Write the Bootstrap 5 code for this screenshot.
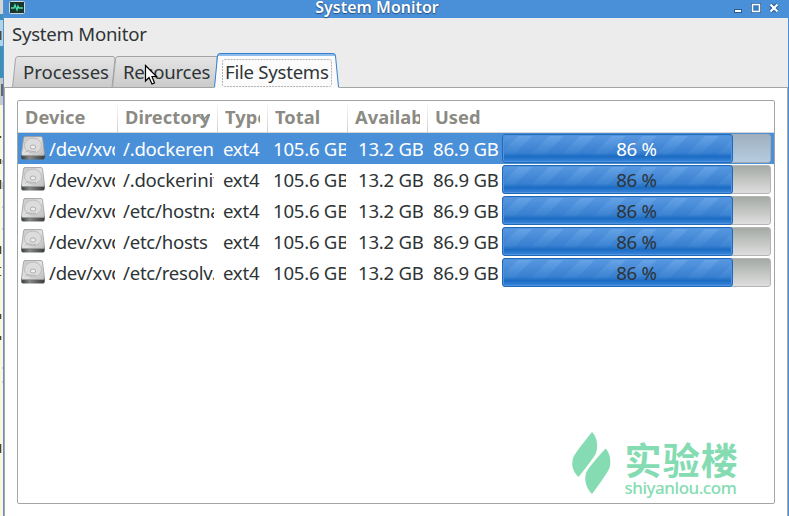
<!DOCTYPE html>
<html lang="en">
<head>
<meta charset="utf-8">
<title>System Monitor</title>
<link rel="stylesheet" href="https://cdn.jsdelivr.net/npm/bootstrap@5.3.0/dist/css/bootstrap.min.css">
<style>
html,body{height:100%}
body{margin:0;overflow:hidden;background:#fff5dc;color:#2e3436;font:18.6px/30px "Noto Sans",sans-serif;letter-spacing:-.25px}
.screen{width:789px;height:516px}
.desk{width:3px;flex:none}
.desk svg{display:block}
.win{width:786px;border-left:1px solid #5c92c8;border-right:1px solid #4a90d9;background:#ececec}
.titlebar{height:18px;background:#4a90d9;color:#fff}
.titlebar .cap{left:0;right:38px;top:-8px;text-align:center;font-size:16px;letter-spacing:0;font-weight:600;text-shadow:0 1px 1px #25507d,1px 0 1px #3a70ad}
.appicon{left:5px;top:1px}
.controls{left:730px;top:2px}
.menu{height:34px;padding:1px 0 0 8px}
.tabs{height:36px}
.tabs svg{left:0;top:0}
.tabs span{position:relative;white-space:nowrap;margin-top:5px;width:102px}
.tabs span:first-of-type{margin-left:19px;width:100px;letter-spacing:-.05px}
.page{height:428px;background:#fff;border:1px solid #a8aaa9;border-width:0 1px;padding:12px 12px 0}
.tree{width:758px;height:404px;border:1px solid #a3a5a5;border-radius:2px;background:#fff}
.line{display:grid;grid-template-columns:100px 100px 50px 80px 80px 346px}
.heads{height:32px;border-bottom:1px solid #d5d5d3;color:#8b8b84;font-weight:700;font-size:18.3px;letter-spacing:.05px}
.heads>div{padding:0 7px;border:0 solid transparent;border-image:linear-gradient(#fff,#ccc) 1;border-right-width:1px;line-height:32px}
.heads>div:last-child{border:0}
.sorter{left:79px;top:12px}
.clip{display:block;overflow:hidden;white-space:nowrap}
.item{height:31px;line-height:31px}
.item.sel{background:#4a90d9;color:#fff}
.item>div{overflow:hidden;white-space:nowrap}
.dev{padding-left:3px;margin-right:3px}
.dev svg{margin:3px 4px 0 0}
.dir{margin:0 4px 0 5px}
.kind{padding-left:5px}
.total{margin:0 2px 0 5px}
.avail{margin:0 5px 0 10px}
.usage{padding-left:5px}
.usage>span{width:69px}
.bar{width:269px;height:29px;margin-top:1px;border:1px solid #b4b6b4;border-radius:3px;background:linear-gradient(#a5aaa5,#dedede)}
.fill{height:29px;margin:-1px 0 0 -1px;border:1px solid #2069b8;border-radius:3px;box-shadow:inset 0 0 0 1px #4f94e0;background:linear-gradient(#3d85d600 0,#2471c7a0 65%,#1c6cc4 80%,#3b87dc 100%),repeating-linear-gradient(135deg,#5998e0 0 11px,#69a5e7 12px 21px,#5998e0 22px)}
.sel .bar{background:linear-gradient(#9fb1c0,#b5cbe0);border-color:#a4acb2}
.pct{inset:0;text-align:center;line-height:27px}
.logo{left:568px;top:428px}
.pointer{left:144px;top:64px}
</style>
<script src="https://cdn.jsdelivr.net/npm/bootstrap@5.3.0/dist/js/bootstrap.bundle.min.js"></script>
</head>
<body>
<svg width="0" height="0" class="position-absolute"><defs>
<linearGradient id="mt" x2="1" y2="1"><stop stop-color="#c4c4c4"/><stop offset=".5" stop-color="#e2e2e2"/><stop offset="1" stop-color="#bbb"/></linearGradient>
<linearGradient id="ft" x2="1"><stop stop-color="#3a3c3b"/><stop offset=".35" stop-color="#858786"/><stop offset="1" stop-color="#3a3c3b"/></linearGradient>
<symbol id="disk" viewBox="0 0 24 24"><path d="M.300 18V21.500Q.300 23.500 2 23.500H22Q23.700 23.500 23.700 21.500V18Z" fill="url(#ft)"/><path d="M4 .500H20Q21.300.500 21.500 2L23.500 18Q23.500 19.500 22 19.500H2Q.400 19.500.5 18L2.500 2Q2.700.500 4 .500Z" fill="url(#mt)" stroke="#9b9c9b" stroke-width=".8"/><ellipse cx="12" cy="9.500" rx="8.500" ry="7.500" fill="#dcdcdc" stroke="#b4b4b4" stroke-width=".8"/><ellipse cx="12" cy="11" rx="2.800" ry="2" fill="#eee" stroke="#a2a2a2" stroke-width=".8"/><path d="M4 16.500C7 12.500 10 17 15 15" fill="none" stroke="#b0b0b0"/></symbol>
<linearGradient id="tg" x2="0" y2="1"><stop stop-color="#e5e5e5"/><stop offset="1" stop-color="#cacaca"/></linearGradient>
</defs></svg>
<div class="screen d-flex position-relative">
  <div class="desk"><svg width="3" height="516"><path fill="#d2d4d5" d="M0 0h3v18H0z"/><path fill="#3c91bb" d="M0 14h3v64H0z"/><path fill="#b0d4e7" d="M0 20h3v26H0z"/><path fill="#c9c9c9" d="M0 78h3v27H0z"/><path stroke="#4b4640" stroke-width="1.500" d="M.7 31v9M2 84v12M.5 136v2M.5 159v5M.5 180v9M.5 246v8M.5 267v1M.5 275v1M.5 314v5M.5 336v4M.5 444v9"/><path stroke="#d9cdb4" d="M2.500 160v4M2.500 182v7M2.500 206v2M2.500 228v2M2.500 367v2M2.500 381v2"/></svg></div>
  <div class="win d-flex flex-column">
    <div class="titlebar position-relative">
      <svg class="appicon position-absolute" width="16" height="13"><rect x=".5" y=".5" width="15" height="12" rx="1" fill="#173831" stroke="#d6d6d0"/><path d="M2 7h3l1-3 2 5 1-4 1 2h4" fill="none" stroke="#4fe0ac" stroke-width="1.300"/></svg>
      <div class="cap position-absolute">System Monitor</div>
      <svg class="controls position-absolute" width="50" height="13"><path d="M0 7h8v4H0zM17 1h10v10H17z" fill="#285b91"/><path d="M1 8h6v2H1z" fill="#fff"/><path d="M18.500 2.500h7v7h-7z" fill="#3a7cc0" stroke="#fff" stroke-width="1.500"/><path d="M36.500 2.500l7 7m0-7l-7 7" stroke="#285b91" stroke-width="4"/><path d="M36.500 2.500l7 7m0-7l-7 7" stroke="#fff" stroke-width="2.200"/></svg>
    </div>
    <div class="menu">System Monitor</div>
    <div class="tabs position-relative d-flex">
      <svg class="position-absolute" width="784" height="36"><path d="M0 35.500H784" stroke="#a3a5a5"/><path d="M8.500 35.500L11.500 7Q12 4.500 14 4.500H109Q111 4.500 111 7L108 35.500ZM108.500 35.500L111.500 7Q112 4.500 114 4.500H213V35.500Z" fill="url(#tg)" stroke="#a3a5a5"/><path d="M210.500 36L213.500 4Q213.500 1.500 216 1.500H329Q331.500 1.500 331.500 4L334.500 36" fill="#fbfbfb"/><path d="M214 3h117" stroke="#8ebced" stroke-width="2"/><path d="M210.500 35L213.500 4Q213.500 1.500 216 1.500H329Q331.500 1.500 331.500 4L334.500 35" fill="none" stroke="#3680cf"/><rect x="218.500" y="7.500" width="109" height="27" rx="2" fill="none" stroke="#b4b4b4" stroke-dasharray="2 1"/></svg>
      <span>Processes</span><span>Resources</span><span>File Systems</span>
    </div>
    <div class="page">
      <div class="tree">
        <div class="line heads"><div><span class="clip">Device</span></div><div class="position-relative"><span class="clip">Directory</span><svg class="sorter position-absolute" width="13" height="9"><path d="M1 2l5 5 5-5" fill="none" stroke="#8b8b84" stroke-width="1.500"/></svg></div><div><span class="clip">Type</span></div><div><span class="clip">Total</span></div><div><span class="clip">Available</span></div><div><span class="clip">Used</span></div></div>
        <div id="rows"></div>
      </div>
    </div>
  </div>
  <svg class="logo position-absolute" width="175" height="74"><path fill="#85dcb2" d="M24 4C29 9 30.500 18 28 25Q26.500 29 10.500 49C5 44 2.500 36 5.500 29Q7 25 24 4ZM37.500 20.500C42 25 43.500 33 41.500 40Q39.500 45 24 66C18 60 16 52 18 45Q19 41 37.500 20.500Z"/><text x="56.500" y="47" font-family="'Noto Sans CJK SC',sans-serif" font-size="37" font-weight="700" fill="#85dcb2" textLength="113">实验楼</text><text x="56.500" y="66" font-family="'Noto Sans',sans-serif" font-size="17" font-weight="500" fill="#85dcb2" textLength="112">shiyanlou.com</text></svg>
  <svg class="pointer position-absolute" width="15" height="22"><path d="M1.500 1.500V17L5 13.500L8 20L10.500 19L8 12.500H12.500Z" fill="#fff" stroke="#000" stroke-width="1.200"/></svg>
</div>
<script>
document.getElementById('rows').innerHTML=['/.dockerenv','/.dockerinit','/etc/hostname','/etc/hosts','/etc/resolv.conf'].map((d,i)=>`<div class="line item ${i?'':'sel'}"><div class="dev d-flex"><svg width="24" height="24" class="flex-shrink-0"><use href="#disk"/></svg><span>/dev/xvda</span></div><div class="dir">${d}</div><div class="kind">ext4</div><div class="total">105.6 GB</div><div class="avail">13.2 GB</div><div class="usage d-flex"><span>86.9 GB</span><div class="bar position-relative"><div class="fill" style="width:86.5%"></div><div class="pct position-absolute">86 %</div></div></div></div>`).join('')
</script>
</body>
</html>
